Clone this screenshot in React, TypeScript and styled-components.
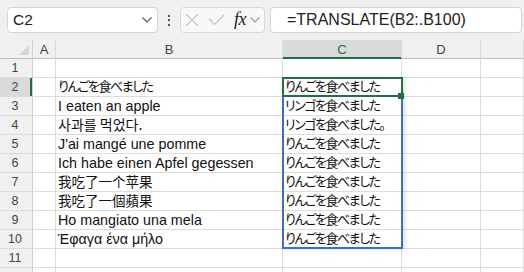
import styled, { createGlobalStyle, css } from 'styled-components'

const GlobalStyle = createGlobalStyle`
  html, body {
    margin: 0;
    padding: 0;
  }
  body {
    width: 524px;
    height: 272px;
    overflow: hidden;
    background: #fff;
    font-family: "Liberation Sans", Arial, sans-serif;
  }
`

type Lang = 'latin' | 'ja' | 'ko' | 'sc' | 'tc'

const fontFor: Record<Lang, string> = {
  latin: '"Liberation Sans", Arial, sans-serif',
  ja: '"Noto Sans CJK JP", sans-serif',
  ko: '"Noto Sans CJK KR", sans-serif',
  sc: '"Noto Sans CJK SC", sans-serif',
  tc: '"Noto Sans CJK TC", sans-serif',
}

const sizeFor: Record<Lang, string> = {
  latin: '14.3px',
  ja: '13px',
  ko: '14px',
  sc: '13.5px',
  tc: '13.5px',
}

const GREEN = '#1e7145'
const BLUE = '#3b6fc6'

const Window = styled.div`
  width: 524px;
  height: 272px;
  overflow: hidden;
  display: flex;
  flex-direction: column;
`

const FormulaBar = styled.div`
  flex: none;
  height: 40px;
  box-sizing: border-box;
  padding: 7px 2px 0 7px;
  background: #f0f0f0;
  display: flex;
  align-items: flex-start;
`

const NameBox = styled.div`
  width: 151px;
  height: 26px;
  box-sizing: border-box;
  border: 1px solid #d6d6d6;
  border-radius: 4px;
  background: #fff;
  display: flex;
  align-items: center;
  justify-content: space-between;
  padding: 0 5px 0 5px;
  font-size: 15.5px;
  color: #222;
`

const Dots = styled.div`
  width: 22px;
  height: 26px;
  display: flex;
  flex-direction: column;
  align-items: center;
  justify-content: center;
  gap: 2.5px;

  span {
    width: 2px;
    height: 2px;
    background: #555;
  }
`

const FxBox = styled.div`
  width: 85px;
  height: 26px;
  box-sizing: border-box;
  border: 1px solid #d9d9d9;
  border-radius: 4px;
  background: #f8f8f8;
  display: flex;
  align-items: center;
  padding-left: 4px;
`

const FxLabel = styled.span`
  font-family: "Liberation Serif", "Times New Roman", serif;
  font-style: italic;
  font-size: 18px;
  color: #222;
  margin: -2px 4px 0 9px;
  letter-spacing: -0.5px;
`

const FormulaInput = styled.div`
  margin-left: 5px;
  flex: 1;
  height: 26px;
  box-sizing: border-box;
  border: 1px solid #d6d6d6;
  border-radius: 4px;
  background: #fff;
  display: flex;
  align-items: center;
  padding-left: 16px;
  font-size: 16px;
  color: #222;
`

const Sheet = styled.div`
  position: relative;
  display: grid;
  grid-template-columns: 33px 23px 227px 119px 79px 1fr;
  grid-auto-rows: 19px;
`

const headBase = css`
  box-sizing: border-box;
  background: #f0f0f0;
  color: #444;
  font-family: "Liberation Sans", Arial, sans-serif;
  font-size: 13px;
  display: flex;
  align-items: center;
  justify-content: center;
`

const Corner = styled.div`
  ${headBase};
  position: relative;
  border-right: 1px solid #d0d0d0;
  border-bottom: 1px solid #bdbdbd;

  &::after {
    content: '';
    position: absolute;
    right: 3px;
    bottom: 3px;
    width: 0;
    height: 0;
    border-left: 10px solid transparent;
    border-bottom: 10px solid #d6d6d6;
  }
`

const ColHead = styled.div<{ $active?: boolean }>`
  ${headBase};
  border-right: 1px solid #dadada;
  border-bottom: 1px solid #bdbdbd;
  padding-top: 1px;
  ${({ $active }) =>
    $active &&
    css`
      background: #dadada;
      color: ${GREEN};
      border-bottom-color: ${GREEN};
      box-shadow: inset 0 -1px 0 ${GREEN};
    `}
`

const RowHead = styled.div<{ $active?: boolean }>`
  ${headBase};
  font-size: 12.5px;
  border-right: 1px solid #d0d0d0;
  border-bottom: 1px solid #dcdcdc;
  padding-right: 2px;
  ${({ $active }) =>
    $active &&
    css`
      background: #dadada;
      box-shadow: inset -2px 0 0 ${GREEN};
    `}
`

const Cell = styled.div<{ $lang?: Lang }>`
  box-sizing: border-box;
  border-right: 1px solid #dcdcdc;
  border-bottom: 1px solid #dcdcdc;
  padding-left: 2px;
  white-space: nowrap;
  color: #111;
  line-height: 18px;
  font-family: ${({ $lang = 'latin' }) => fontFor[$lang]};
  font-size: ${({ $lang = 'latin' }) => sizeFor[$lang]};
  ${({ $lang }) =>
    $lang === 'ja' &&
    css`
      font-feature-settings: 'palt';
      letter-spacing: -1.5px;
    `}
  ${({ $lang }) =>
    $lang && $lang !== 'latin' &&
    css`
      margin-top: -1px;
    `}
`

const RangeBox = styled.div`
  position: absolute;
  left: 282px;
  top: 37px;
  width: 121px;
  height: 172px;
  box-sizing: border-box;
  border: 2px solid ${BLUE};
  box-shadow: 2px 1px 4px rgba(0, 0, 0, 0.12);
  pointer-events: none;
`

const ActiveBox = styled.div`
  position: absolute;
  left: 282px;
  top: 37px;
  width: 121px;
  height: 20px;
  box-sizing: border-box;
  border: 2px solid ${GREEN};
  pointer-events: none;
`

const FillHandle = styled.div`
  position: absolute;
  left: 398px;
  top: 53px;
  width: 6px;
  height: 6px;
  background: ${GREEN};
`

const Chevron = ({ color, w = 10 }: { color: string; w?: number }) => (
  <svg width={w} height="6" viewBox="0 0 10 6">
    <path d="M0.5 0.5 L5 5 L9.5 0.5" fill="none" stroke={color} strokeWidth="1.1" />
  </svg>
)

type Row = { b?: string; bLang?: Lang; c?: string }

const rows: Row[] = [
  {},
  { b: 'りんごを食べました', bLang: 'ja', c: 'りんごを食べました' },
  { b: 'I eaten an apple', c: 'リンゴを食べました' },
  { b: '사과를 먹었다.', bLang: 'ko', c: 'リンゴを食べました。' },
  { b: "J'ai mangé une pomme", c: 'りんごを食べました' },
  { b: 'Ich habe einen Apfel gegessen', c: 'りんごを食べました' },
  { b: '我吃了一个苹果', bLang: 'sc', c: 'りんごを食べました' },
  { b: '我吃了一個蘋果', bLang: 'tc', c: 'りんごを食べました' },
  { b: 'Ho mangiato una mela', c: 'りんごを食べました' },
  { b: 'Έφαγα ένα μήλο', c: 'りんごを食べました' },
  {},
  {},
]

const columns = ['A', 'B', 'C', 'D', '']

export default function App() {
  return (
    <>
      <GlobalStyle />
      <Window>
        <FormulaBar>
          <NameBox>
            <span>C2</span>
            <Chevron color="#555" />
          </NameBox>
          <Dots>
            <span />
            <span />
            <span />
          </Dots>
          <FxBox>
            <svg width="14" height="14" viewBox="0 0 14 14">
              <path d="M1 1 L13 13 M13 1 L1 13" stroke="#c4c4c4" strokeWidth="1.2" />
            </svg>
            <svg width="17" height="12" viewBox="0 0 17 12" style={{ marginLeft: 9 }}>
              <path d="M0.8 4.5 L6.5 10.5 L16 1" fill="none" stroke="#c4c4c4" strokeWidth="1.2" />
            </svg>
            <FxLabel>fx</FxLabel>
            <Chevron color="#9a9a9a" />
          </FxBox>
          <FormulaInput>=TRANSLATE(B2:.B100)</FormulaInput>
        </FormulaBar>

        <Sheet>
          <Corner />
          {columns.map((col) => (
            <ColHead key={col || 'E'} $active={col === 'C'}>
              {col}
            </ColHead>
          ))}

          {rows.map((row, i) => (
            <>
              {/* row 12 is only a sliver at the bottom edge, its number is not visible */}
              <RowHead key={'h' + i} $active={i === 1}>
                {i < 11 ? i + 1 : ''}
              </RowHead>
              <Cell key={'a' + i} />
              <Cell key={'b' + i} $lang={row.b ? row.bLang || 'latin' : undefined}>
                {row.b}
              </Cell>
              <Cell key={'c' + i} $lang={row.c ? 'ja' : undefined}>
                {row.c}
              </Cell>
              <Cell key={'d' + i} />
              <Cell key={'e' + i} />
            </>
          ))}

          <RangeBox />
          <ActiveBox />
          <FillHandle />
        </Sheet>
      </Window>
    </>
  )
}
